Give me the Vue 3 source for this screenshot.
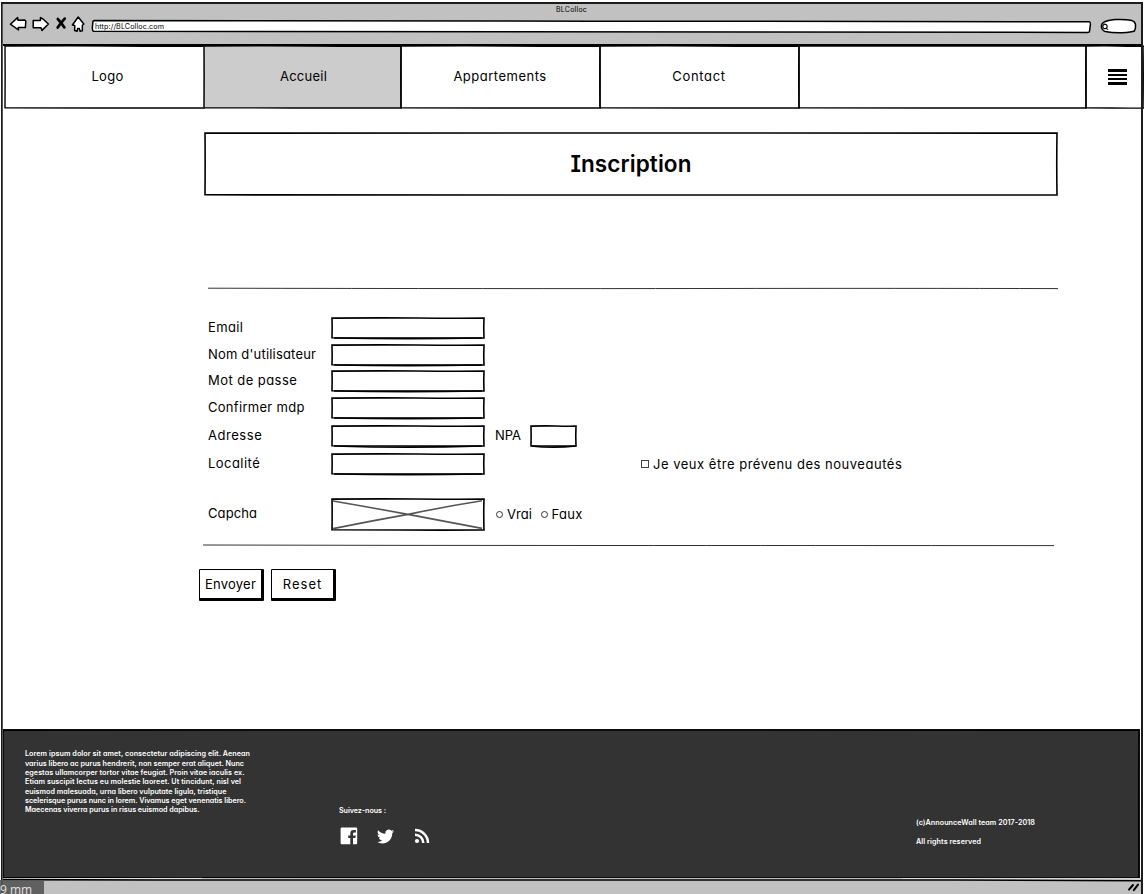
<script setup>
import { h } from 'vue'

// Spreads a text's letters so that it takes the given width in pixels.
const vFit = {
  mounted(el, { value }) {
    const natural = el.getBoundingClientRect().width
    const count = el.textContent.length
    el.style.letterSpacing = (value - natural) / (count - 0.5) + 'px'
  }
}

// Hand-drawn rectangle outline that covers its parent; `heavy` bows the lower edge.
const Sketch = ({ w, h: ht, heavy }) => {
  const b = ht - 1
  const r = w - 1
  return h('svg', { class: 'edge', viewBox: `0 0 ${w} ${ht}`, width: w, height: ht }, [
    h('path', {
      d: `M1 1.1 Q${w * 0.3} .7 ${w * 0.55} 1 T${r} 1.1 Q${r - 0.5} ${ht * 0.5} ${r} ${b} Q${w * 0.7} ${b + 0.2} ${w * 0.45} ${b} T1 ${b - 0.2} Q1.3 ${ht * 0.5} 1 1.1Z`
    }),
    heavy ? h('path', { d: `M${w * 0.02} ${b} Q${w * 0.5} ${b + heavy} ${w * 0.98} ${b}` }) : null
  ])
}
Sketch.props = ['w', 'h', 'heavy']

const nav = [
  { text: 'Logo', cell: 199, fit: 32, cls: 'logo' },
  { text: 'Accueil', cell: 197, fit: 47, cls: 'active' },
  { text: 'Appartements', cell: 199, fit: 93 },
  { text: 'Contact', cell: 199, fit: 53 }
]

const fields = [
  { text: 'Email', fit: 35, cls: 'f0' },
  { text: "Nom d'utilisateur", fit: 108, cls: 'f1' },
  { text: 'Mot de passe', fit: 89, cls: 'f2' },
  { text: 'Confirmer mdp', fit: 96.5, cls: 'f3' },
  { text: 'Adresse', fit: 54, cls: 'f4', npa: true },
  { text: 'Localité', fit: 52, cls: 'f5', news: true }
]

const lorem = [
  ['Lorem ipsum dolor sit amet, consectetur adipiscing elit. Aenean', 225],
  ['varius libero ac purus hendrerit, non semper erat aliquet. Nunc', 219],
  ['egestas ullamcorper tortor vitae feugiat. Proin vitae iaculis ex.', 219.5],
  ['Etiam suscipit lectus eu molestie laoreet. Ut tincidunt, nisl vel', 216],
  ['euismod malesuada, urna libero vulputate ligula, tristique', 201.5],
  ['scelerisque purus nunc in lorem. Vivamus eget venenatis libero.', 221],
  ['Maecenas viverra purus in risus euismod dapibus.', 174.5]
]
</script>

<template>
  <div class="window">
    <header class="chrome">
      <div class="title"><span v-fit="31">BLColloc</span></div>
      <div class="tools">
        <svg class="icons" width="80" height="20" viewBox="0 0 80 20">
          <path class="ico" d="M1.4 11.2 L8.6 4.6 L9 7.2 L15.8 7 L16.8 8 L16.4 14.6 L9.2 14.6 L9.5 17 Z" />
          <path class="ico" d="M24.2 7.6 L31.4 7.5 L31.5 4.6 L34 6 L39.4 11 L33 17.4 L32 14.8 L24.2 14.8 Z" />
          <path class="cross" d="M48.8 6 Q51.8 9.2 55.4 14.4 M55.7 5.6 Q52.2 9.4 48.7 14.6" />
          <path class="ico" d="M63.4 12 L69.2 4 L74.8 11 L73.3 12.6 L73.4 17.8 L71 18.2 L70.4 15.6 L68.6 15.4 L68.2 18.2 L65.6 17.6 L65.8 12.6 Z" />
        </svg>
        <div class="url">
          <svg class="edge" width="1000" height="14" viewBox="0 0 1000 14">
            <path class="bar" d="M1 1.2 L2.4 .5 Q300 .9 500 1.2 T997.4 1.7 Q998.8 2 998.2 6 L997.4 12 Q997.2 12.4 995.4 12.4 Q500 11.6 1.4 11.2 Q.1 10.5 .4 7Z" />
          </svg>
          <span v-fit="69">http://BLColloc.com</span>
        </div>
        <svg class="search" width="38" height="18" viewBox="0 0 38 18">
          <path class="ico" d="M1.4 10.5 Q1.4 7.6 4 6.2 Q7.5 4.2 15 3.6 Q25 3 32 4.6 Q35 5.4 35.5 8.6 Q36 12.6 34.4 15 Q32 16.2 22 16.8 Q12 17 5.2 15.6 Q1.8 14.4 1.4 10.5Z" />
          <path class="lens" d="M5.6 8.3 a2.2 2.2 0 1 0 .1 4.2 a2.2 2.2 0 0 0 -.1 -4.2 M6 12 L8 13.6" />
        </svg>
      </div>
    </header>

    <nav class="nav">
      <div v-for="n in nav" :key="n.text" class="cell" :class="n.cls" :style="{ width: n.cell + 'px' }">
        <Sketch :w="n.cell + 2" :h="64" />
        <span v-fit="n.fit">{{ n.text }}</span>
      </div>
      <div class="cell rest"><Sketch :w="289" :h="64" /></div>
      <div class="cell menu">
        <Sketch :w="60" :h="64" />
        <i v-for="k in 4" :key="k"></i>
      </div>
    </nav>

    <main class="main">
      <h1 class="heading">
        <Sketch :w="854" :h="64" />
        <span v-fit="121">Inscription</span>
      </h1>
      <svg class="rule top" width="852" height="3" viewBox="0 0 852 3">
        <path d="M1 1.2 Q300 1.8 500 1.5 T851 1.6" />
      </svg>

      <form class="form" @submit.prevent>
        <div v-for="f in fields" :key="f.text" class="row" :class="f.cls">
          <div class="name"><span v-fit="f.fit">{{ f.text }}</span></div>
          <div class="input"><Sketch :w="154" :h="22" :heavy="f.npa ? 2.4 : 1.3" /></div>
          <template v-if="f.npa">
            <div class="npa"><span v-fit="26">NPA</span></div>
            <div class="input short"><Sketch :w="47" :h="22" :heavy="2.6" /></div>
          </template>
          <label v-if="f.news" class="news">
            <b class="check"></b><span v-fit="249">Je veux être prévenu des nouveautés</span>
          </label>
        </div>
        <div class="row captcha">
          <div class="name"><span v-fit="49">Capcha</span></div>
          <div class="input picture">
            <Sketch :w="154" :h="33" />
            <svg class="diag" width="154" height="33" viewBox="0 0 154 33">
              <path d="M2 3 Q40 9.5 77 16.4 Q112 23 151 30.4 M2 30.6 Q40 23 77 16.4 Q112 9 151 2.8" />
            </svg>
          </div>
          <label class="choice first"><b class="radio"></b><span v-fit="25">Vrai</span></label>
          <label class="choice"><b class="radio"></b><span v-fit="31">Faux</span></label>
        </div>
      </form>

      <svg class="rule bottom" width="852" height="3" viewBox="0 0 852 3">
        <path d="M0 1 Q200 1.5 400 1.5 T851 1.6" />
      </svg>
      <div class="actions">
        <button type="button"><span v-fit="51">Envoyer</span></button>
        <button type="button"><span v-fit="39">Reset</span></button>
      </div>
    </main>

    <footer class="footer">
      <Sketch :w="1138" :h="150" />
      <div class="lorem">
        <div v-for="[line, width] in lorem" :key="line"><span v-fit="width">{{ line }}</span></div>
      </div>
      <div class="follow">
        <div class="small"><span v-fit="47">Suivez-nous :</span></div>
        <div class="social">
          <svg width="18" height="18" viewBox="0 0 18 18">
            <path d="M1.8.5 H16 Q17.2.5 17.2 1.7 V16 Q17.2 17.2 16 17.2 H13 V11 H15.4 L15.7 8.4 H13 V7 Q13 5.6 14.3 5.6 H15.9 V3.1 H13.7 Q10.3 3.1 10.3 6.5 V8.4 H8.2 V11 H10.3 V17.2 H1.8 Q.6 17.2 .6 16 V1.7 Q.6.5 1.8.5Z" />
          </svg>
          <svg width="17" height="17" viewBox="0 0 24 24">
            <path d="M23.95 4.57a10 10 0 0 1-2.82.78 4.96 4.96 0 0 0 2.16-2.72c-.95.55-2 .95-3.13 1.18a4.92 4.92 0 0 0-8.38 4.48C7.69 8.1 4.07 6.13 1.64 3.16a4.82 4.82 0 0 0-.67 2.48c0 1.71.87 3.21 2.19 4.1a4.9 4.9 0 0 1-2.23-.62v.06a4.92 4.92 0 0 0 3.95 4.83 5 5 0 0 1-2.21.08 4.94 4.94 0 0 0 4.6 3.42A9.87 9.87 0 0 1 0 19.54a13.99 13.99 0 0 0 7.56 2.21c9.05 0 14-7.5 14-13.98 0-.21 0-.42-.02-.63a9.94 9.94 0 0 0 2.46-2.55z" />
          </svg>
          <svg width="16" height="16" viewBox="0 0 16 16">
            <circle cx="3" cy="13" r="2.1" />
            <path class="wave" d="M1 6.7 A8.3 8.3 0 0 1 9.3 15 M1 2 A13 13 0 0 1 14 15" />
          </svg>
        </div>
      </div>
      <div class="legal">
        <div><span v-fit="119">(c)AnnounceWall team 2017-2018</span></div>
        <div><span v-fit="65">All rights reserved</span></div>
      </div>
    </footer>

    <div class="status">
      <svg class="edge seam" width="1140" height="5" viewBox="0 0 1140 5">
        <path class="gap" d="M1 .6 L200 .4 M900 .6 L1139 1" />
        <path d="M1 1.6 L150 2 H950 L1139 2.8" />
      </svg>
      <div class="ruler">9 mm</div>
      <svg class="grip" width="14" height="10" viewBox="0 0 14 10">
        <path d="M2 7.6 L6 3 M6.8 8.2 L11 2.6" />
      </svg>
    </div>
  </div>
</template>

<style>
body {
  background: #fff;
  overflow: hidden;
}
</style>

<style scoped>
* {
  box-sizing: border-box;
}
.window {
  position: relative;
  width: 1144px;
  height: 894px;
  padding: 2px 1px 0 1px;
  overflow: hidden;
  background: #fff;
  color: #000;
  font-family: Inter, Lato, 'Liberation Sans', sans-serif;
  font-feature-settings: 'cv11' 1, 'cv08' 0;
  font-size: 13px;
  line-height: 16px;
  display: flex;
  flex-direction: column;
}
.window::after {
  content: '';
  position: absolute;
  inset: 2px 1px -4px 1px;
  border: 2px solid #1c1c1c;
  border-left-width: 1.5px;
  box-shadow: inset 1px 0 #555;
  pointer-events: none;
}
span {
  white-space: pre;
  display: inline-block;
}
.edge {
  position: absolute;
  left: 0;
  top: 0;
  overflow: visible;
  fill: none;
  stroke: #000;
  stroke-width: 1.6;
  stroke-linejoin: miter;
}
.chrome {
  height: 44px;
  background: #c1c1c1;
  border-bottom: 2px solid #000;
  flex: none;
}
.title {
  height: 17px;
  padding: 2px 0 0 555px;
  font-size: 7px;
  line-height: 12px;
}
.tools {
  display: flex;
  height: 20px;
  padding-left: 8px;
  margin-top: -6px;
}
.icons {
  flex: none;
}
.ico {
  fill: #fff;
  stroke: #000;
  stroke-width: 1.5;
  stroke-linejoin: round;
}
.cross {
  fill: none;
  stroke: #000;
  stroke-width: 2.7;
  stroke-linecap: round;
}
.url {
  position: relative;
  width: 1000px;
  height: 14px;
  margin: 7px 0 0 3px;
  padding-left: 3px;
  font-size: 7.2px;
  line-height: 13px;
  flex: none;
}
.url span {
  position: relative;
}
.bar {
  fill: #fff;
  stroke-width: 1.5;
}
.search {
  margin: 2.5px 0 0 7.5px;
  flex: none;
}
.lens {
  fill: none;
  stroke: #000;
  stroke-width: 1.2;
}
.nav {
  display: flex;
  height: 63px;
  padding-left: 3px;
  flex: none;
}
.cell {
  position: relative;
  height: 62px;
  display: flex;
  justify-content: center;
  align-items: center;
  padding: 0 0 2px 1px;
  flex: none;
}
.cell .edge {
  top: -1px;
  stroke-width: 1.4;
}
.cell span {
  position: relative;
}
.cell.logo {
  padding-left: 8px;
}
.cell.active {
  background: #ccc;
  padding-left: 4px;
}
.rest {
  width: 287px;
}
.menu {
  width: 59px;
  padding: 0 0 0 5px;
  flex-direction: column;
  justify-content: center;
  gap: 2px;
}
.menu i {
  width: 19px;
  height: 2.4px;
  background: #000;
}
.main {
  height: 620px;
  padding: 23px 0 0 198px;
  flex: none;
}
.heading {
  position: relative;
  width: 854px;
  height: 64px;
  margin: 0 0 0 5px;
  font-size: 22.5px;
  font-weight: 600;
  line-height: 63px;
  text-align: center;
  font-feature-settings: 'cv11' 1, 'cv08' 1;
}
.rule {
  display: block;
  fill: none;
  stroke: #333;
  stroke-width: 1;
}
.rule.top {
  margin: 91px 0 0 8px;
}
.rule.bottom {
  margin: 14px 0 0 4px;
}
.form {
  margin: 26px 0 0 9px;
}
.row {
  display: flex;
  align-items: center;
  height: 22px;
}
.name {
  width: 123px;
}
.input {
  position: relative;
  width: 154px;
  height: 22px;
}
.input .edge {
  top: 0.5px;
}
.f1 {
  margin-top: 5px;
}
.f2 {
  margin-top: 4px;
}
.f3 {
  margin-top: 5px;
}
.f4,
.f5 {
  margin-top: 6px;
}
.npa {
  width: 45px;
  padding-left: 10px;
}
.short {
  width: 47px;
}
.news {
  display: flex;
  align-items: center;
  gap: 4px;
  margin: 1px 0 0 156px;
}
.check {
  width: 8px;
  height: 8px;
  border: 1px solid #444;
}
.captcha {
  margin-top: 23px;
  height: 33px;
}
.captcha .name {
  margin-top: -1px;
}
.picture {
  height: 33px;
}
.diag {
  position: absolute;
  left: 0;
  top: 0.5px;
  fill: none;
  stroke: #555;
  stroke-width: 1.6;
}
.choice {
  display: flex;
  align-items: center;
  gap: 4px;
  margin: 1px 0 0 8.5px;
}
.choice.first {
  margin-left: 11px;
}
.radio {
  width: 7px;
  height: 7px;
  border: 1px solid #333;
  border-radius: 50%;
}
.actions {
  display: flex;
  gap: 7px;
  margin-top: 22px;
}
button {
  width: 65px;
  height: 32px;
  padding: 0;
  border: 1px solid #000;
  border-width: 1px 3px 3px 1px;
  border-radius: 1px;
  background: #fff;
  color: #000;
  font: inherit;
  font-feature-settings: inherit;
  text-align: center;
}
.footer {
  position: relative;
  width: 1138px;
  height: 149px;
  margin: 0 0 0 1px;
  background: #333;
  color: #fff;
  display: flex;
  font-size: 7.2px;
  font-weight: 600;
  line-height: 9.35px;
  flex: none;
}
.lorem {
  width: 337px;
  padding: 20.4px 0 0 23px;
}
.lorem div {
  height: 9.35px;
}
.lorem span {
  display: block;
  width: max-content;
}
.follow {
  width: 577px;
  padding-top: 77.4px;
}
.social {
  display: flex;
  gap: 19.5px;
  align-items: center;
  margin: 11.6px 0 0 0.5px;
  fill: #fff;
}
.wave {
  fill: none;
  stroke: #fff;
  stroke-width: 2.5;
}
.legal {
  padding-top: 89.4px;
}
.legal div {
  height: 19px;
}
.status {
  position: relative;
  height: 20px;
  margin: 0 2px 0 1px;
  background: #c1c1c1;
  display: flex;
  justify-content: space-between;
  flex: none;
}
.seam {
  top: 0;
}
.gap {
  stroke: #dfe6df;
  stroke-width: 1;
}
.ruler {
  position: relative;
  z-index: 2;
  width: 44px;
  height: 18px;
  margin: 2px 0 0 -2px;
  padding: 2px 0 0 0;
  background: rgba(85, 85, 85, 0.9);
  color: #e2e2e2;
  font-family: 'Open Sans', sans-serif;
  font-size: 12px;
}
.grip {
  margin: 4px 0 0;
  fill: none;
  stroke: #000;
  stroke-width: 2;
  stroke-linecap: round;
}
</style>
